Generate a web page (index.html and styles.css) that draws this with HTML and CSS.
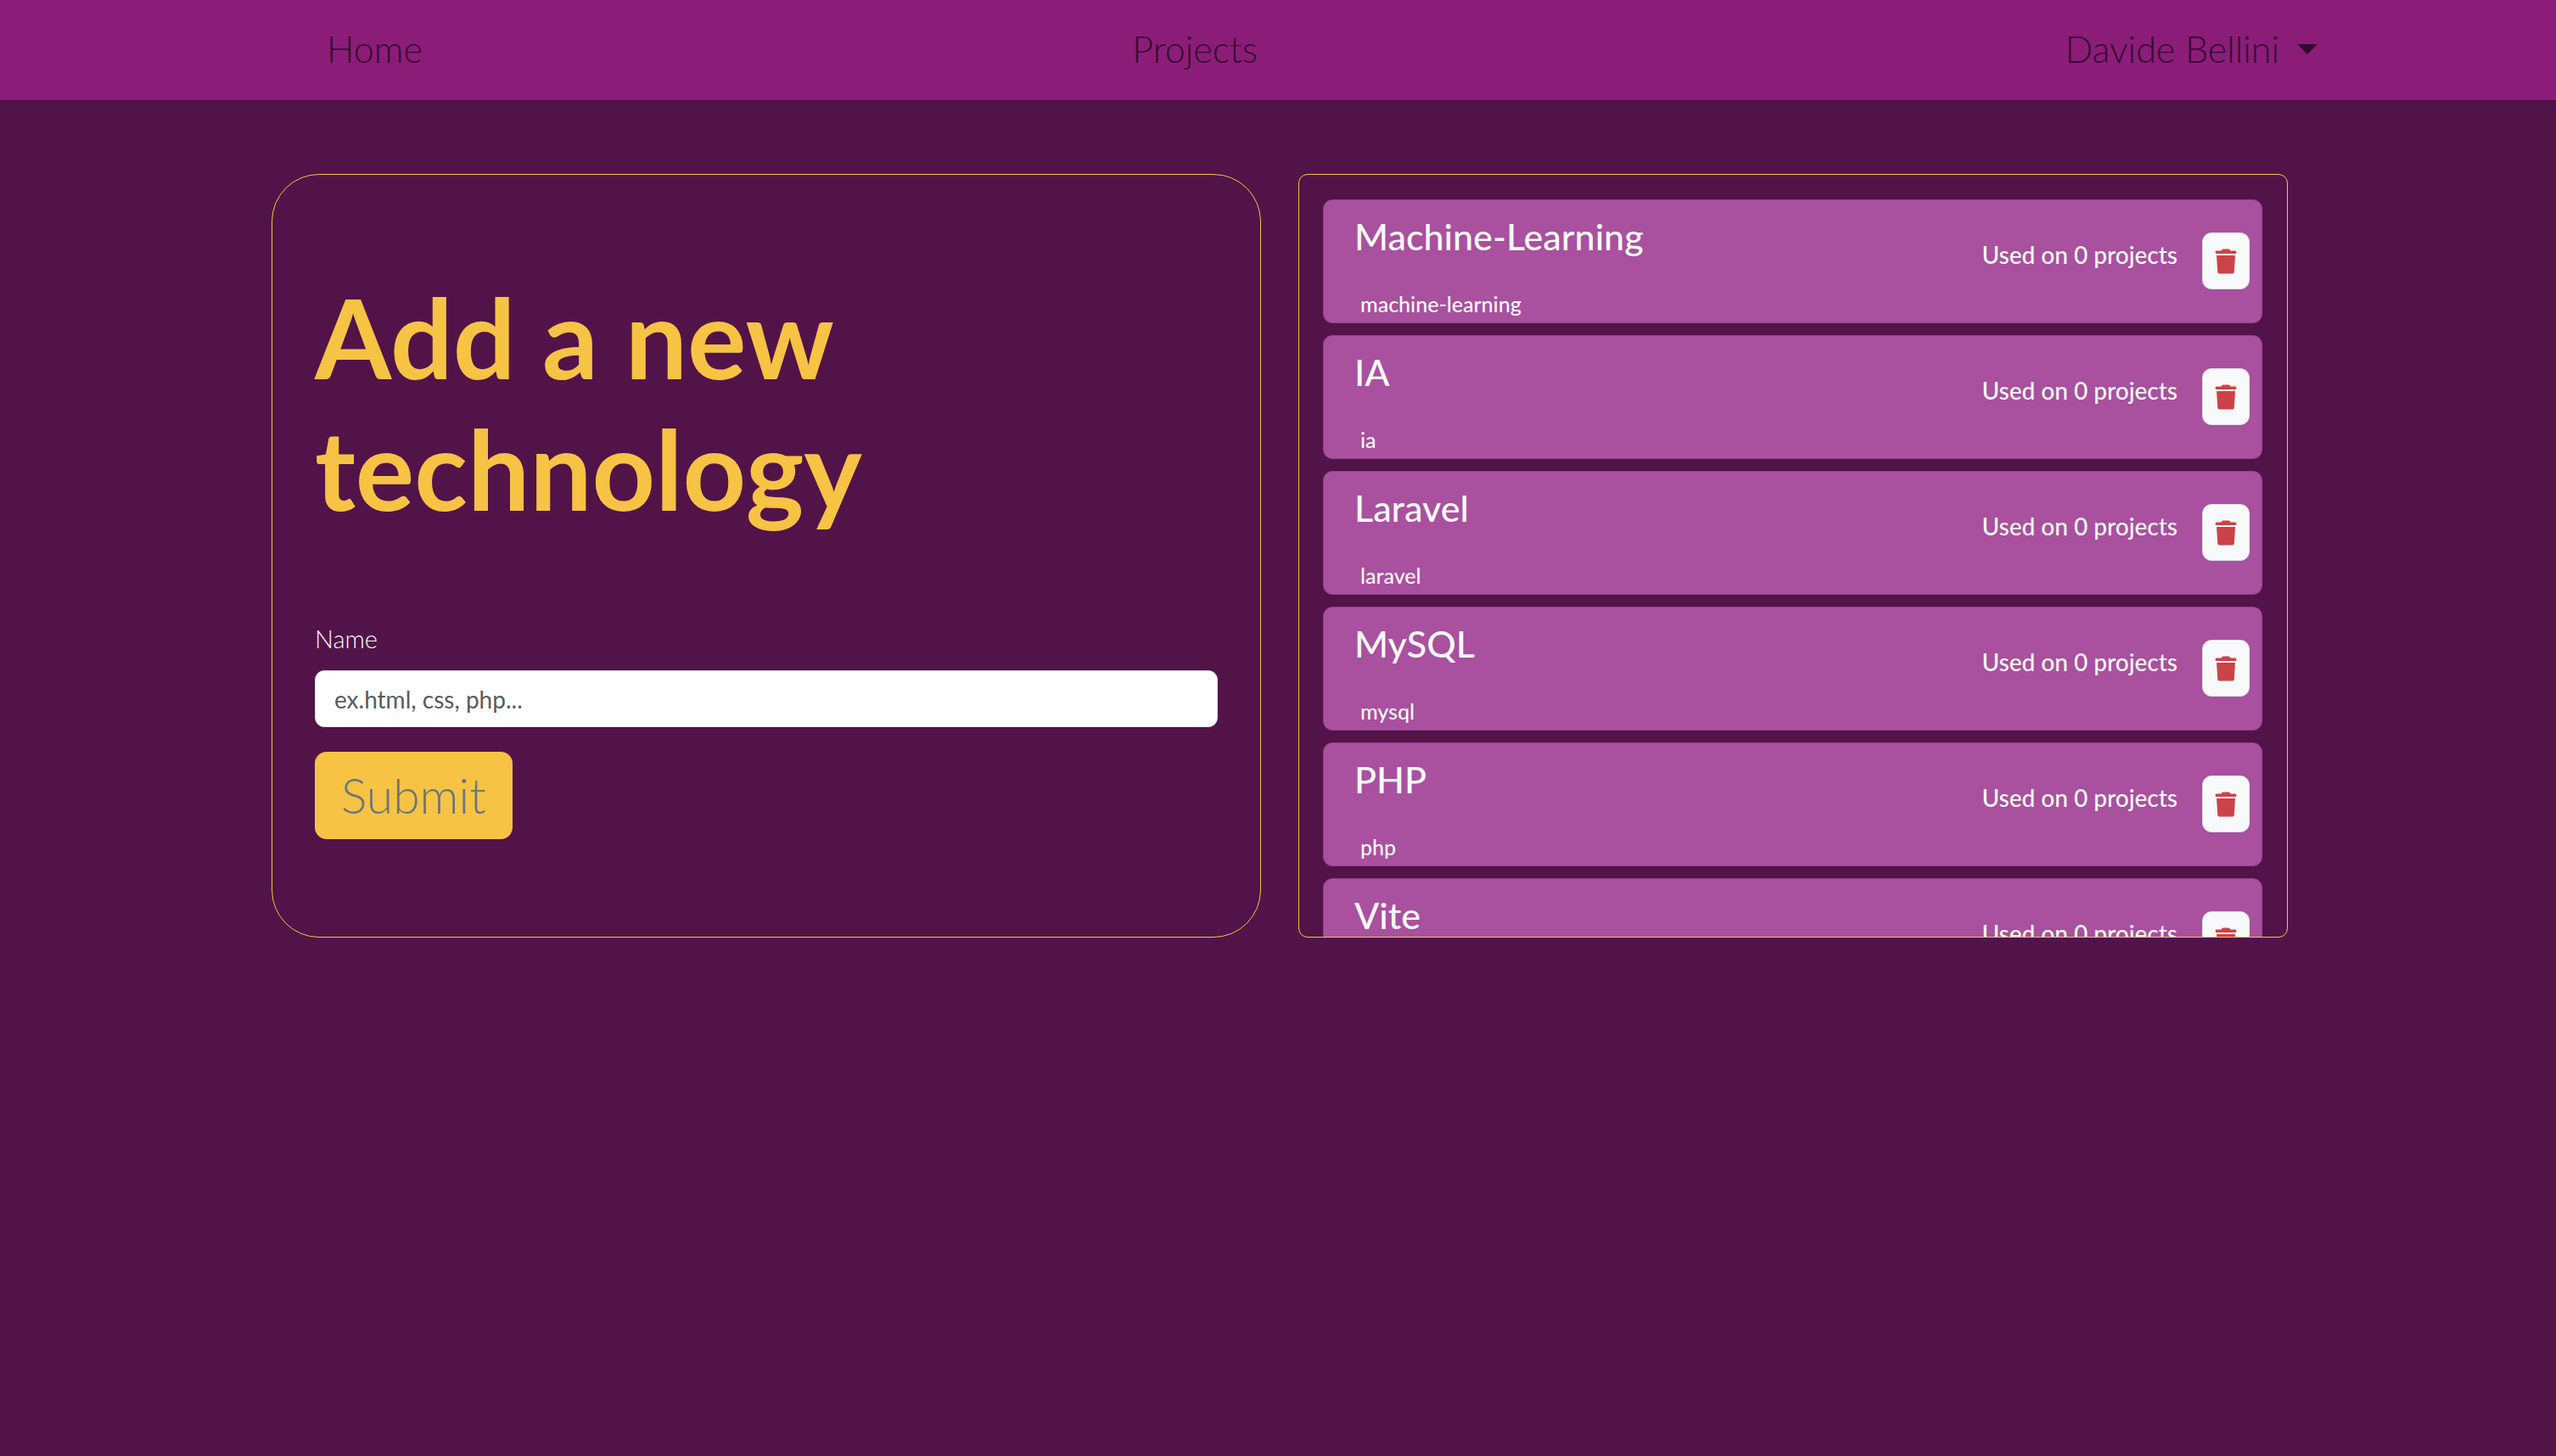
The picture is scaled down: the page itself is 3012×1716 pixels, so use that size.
FILE: index.html
```html
<!DOCTYPE html>
<html lang="en">
<head>
  <meta charset="utf-8">
  <meta name="viewport" content="width=device-width, initial-scale=1">
  <title>Technologies</title>
  <link rel="stylesheet" href="styles.css">
</head>
<body>
  <svg class="sprite" aria-hidden="true">
    <symbol id="trash" viewBox="0 0 26 30">
      <path d="M2 2.500H7.500Q8.500 .5 10 .5H16Q17.500 .5 18.500 2.500H24Q25.500 2.500 25.500 4.200Q25.500 6 24 6H2Q.5 6 .5 4.200Q.5 2.500 2 2.500Z"/>
      <path d="M2 8H24L22.800 27.500Q22.600 29.500 20.800 29.500H5.300Q3.500 29.500 3.300 27.500Z"/>
    </symbol>
  </svg>

  <header class="navbar">
    <nav class="navbar-inner">
      <a class="nav-link" href="#">Home</a>
      <a class="nav-link" href="#">Projects</a>
      <a class="nav-link dropdown" href="#">Davide Bellini</a>
    </nav>
  </header>

  <main class="content">
    <section class="panel form-panel">
      <h1>Add a new technology</h1>
      <form class="tech-form">
        <label for="name">Name</label>
        <input id="name" type="text" placeholder="ex.html, css, php...">
        <button class="submit" type="button">Submit</button>
      </form>
    </section>

    <ul class="panel tech-list">
      <li class="tech">
        <div class="tech-text"><h2>Machine-Learning</h2><p>machine-learning</p></div>
        <span class="usage">Used on 0 projects</span>
        <button class="delete" type="button" aria-label="Delete"><svg><use href="#trash"/></svg></button>
      </li>
      <li class="tech">
        <div class="tech-text"><h2>IA</h2><p>ia</p></div>
        <span class="usage">Used on 0 projects</span>
        <button class="delete" type="button" aria-label="Delete"><svg><use href="#trash"/></svg></button>
      </li>
      <li class="tech">
        <div class="tech-text"><h2>Laravel</h2><p>laravel</p></div>
        <span class="usage">Used on 0 projects</span>
        <button class="delete" type="button" aria-label="Delete"><svg><use href="#trash"/></svg></button>
      </li>
      <li class="tech">
        <div class="tech-text"><h2>MySQL</h2><p>mysql</p></div>
        <span class="usage">Used on 0 projects</span>
        <button class="delete" type="button" aria-label="Delete"><svg><use href="#trash"/></svg></button>
      </li>
      <li class="tech">
        <div class="tech-text"><h2>PHP</h2><p>php</p></div>
        <span class="usage">Used on 0 projects</span>
        <button class="delete" type="button" aria-label="Delete"><svg><use href="#trash"/></svg></button>
      </li>
      <li class="tech">
        <div class="tech-text"><h2>Vite</h2><p>vite</p></div>
        <span class="usage">Used on 0 projects</span>
        <button class="delete" type="button" aria-label="Delete"><svg><use href="#trash"/></svg></button>
      </li>
    </ul>
  </main>
</body>
</html>
```

FILE: styles.css
```css
* {
  box-sizing: border-box;
  margin: 0;
}

body {
  background: #521349;
  color: #f8f9fa;
  font-family: Lato, "Liberation Sans", sans-serif;
  font-size: 28px;
  line-height: 44px;
}

button,
input {
  font: inherit;
}

.sprite {
  display: none;
}

.navbar {
  background: #8b1d78;
  box-shadow: 0 4px 8px rgba(0, 0, 0, 0.08);
  padding: 24px 281px 26px 385px;
}

.navbar-inner {
  display: grid;
  grid-template-columns: 19fr 22fr auto;
}

.nav-link {
  color: #330a2c;
  font-size: 43px;
  font-weight: 300;
  line-height: 68px;
  text-decoration: none;
}

.dropdown {
  display: flex;
  align-items: center;
  gap: 21px;
}

.dropdown::after {
  content: "";
  border: 12px solid transparent;
  border-top-color: currentColor;
  border-bottom: 0;
}

.content {
  display: grid;
  grid-template-columns: 1fr 1fr;
  gap: 44px;
  padding: 87px 316px 87px 320px;
}

.panel {
  height: 900px;
  border: 1px solid #f6c344;
}

.form-panel {
  border-radius: 56px;
  padding: 114px 50px 0;
}

h1 {
  max-width: 800px;
  color: #f6c344;
  font-size: 130px;
  font-weight: 700;
  line-height: 155px;
}

.tech-form {
  display: flex;
  flex-direction: column;
  align-items: flex-start;
  margin-top: 101px;
}

label {
  font-size: 29px;
  font-weight: 300;
}

input {
  width: 100%;
  height: 67px;
  margin: 15px 0 29px;
  padding: 0 22px;
  border: 1px solid #dee2e6;
  border-radius: 11px;
  background: #fff;
}

input::placeholder {
  color: #585c5f;
  opacity: 1;
}

.submit {
  padding: 8px 31px;
  border: 0;
  border-radius: 14px;
  background: #f6c344;
  color: #6c757d;
  font-size: 57px;
  font-weight: 300;
  line-height: 87px;
}

.tech-list {
  display: flex;
  flex-direction: column;
  gap: 14px;
  padding: 29px 29px 0 28px;
  border-radius: 11px;
  list-style: none;
  overflow: hidden;
}

.tech {
  display: flex;
  flex: none;
  gap: 29px;
  height: 146px;
  padding: 0 14px 0 36px;
  border: 1px solid #934389;
  border-radius: 11px;
  background: #a9509f;
}

.tech-text {
  flex: 1;
  padding-top: 17px;
}

h2 {
  font-size: 43px;
  font-weight: 500;
  line-height: 52px;
}

.tech-text p {
  padding: 34px 0 0 7px;
  font-size: 25px;
  font-weight: 500;
  line-height: 38px;
}

.usage {
  padding-top: 42px;
  font-weight: 500;
}

.delete {
  display: flex;
  align-items: flex-start;
  justify-content: center;
  width: 56px;
  height: 67px;
  margin-top: 38px;
  padding: 18px 0 0;
  border: 1px solid #dee2e6;
  border-radius: 11px;
  background: #f8f9fa;
}

.delete svg {
  width: 26px;
  height: 30px;
  fill: #cb4348;
}
```
